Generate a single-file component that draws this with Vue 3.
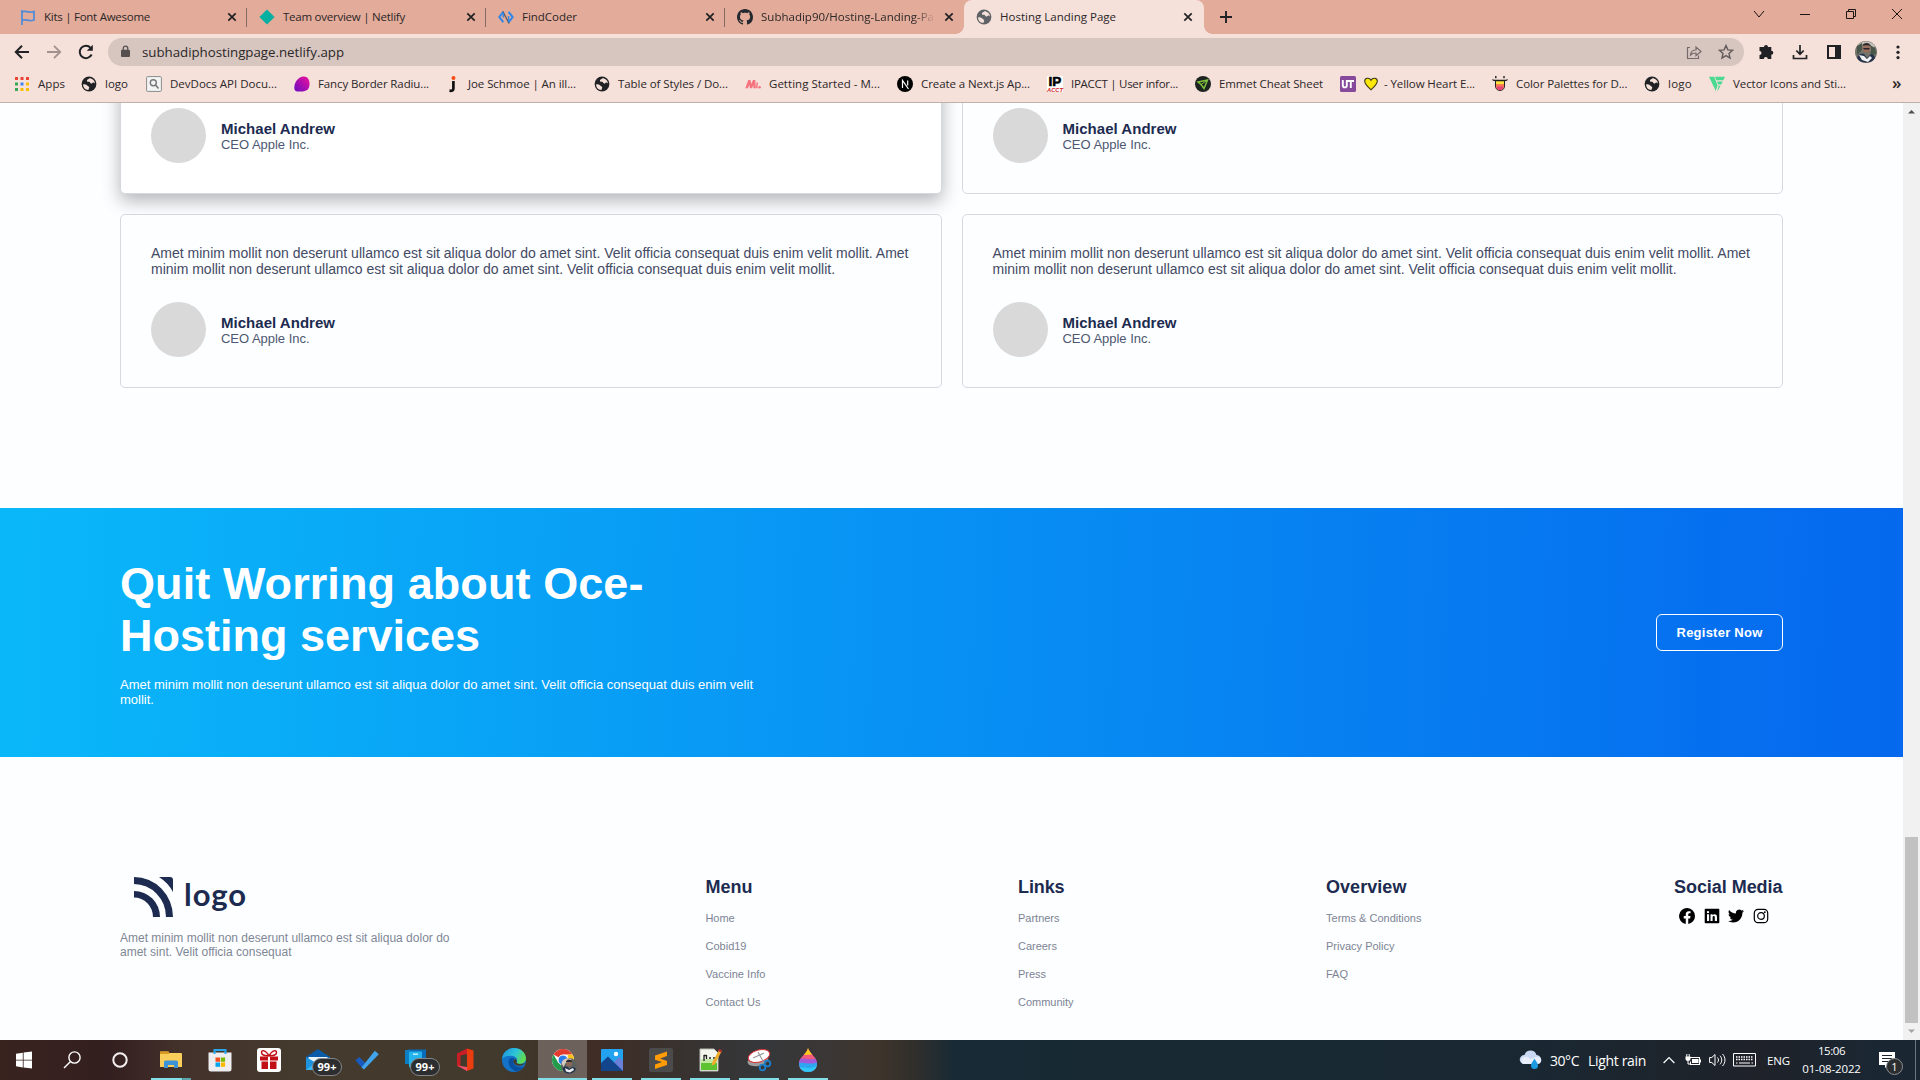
<script setup>
// Spreads a line of text over a given width by adjusting its tracking
const vFit = {
  mounted(el, { value }) {
    if (!value) return
    const range = document.createRange()
    range.selectNodeContents(el)
    const width = range.getBoundingClientRect().width
    const count = el.textContent.trim().length
    el.style.letterSpacing = ((value - width) / count).toFixed(3) + 'px'
  },
}

const globe = (c) =>
  `<circle cx="8" cy="8" r="7.4" fill="${c}"/><path d="M2.2 8.2c1.6.2 3 .1 4 1.2.8.9 2 .8 2 2 0 1-.8 1.300-.7 2.500-3.100.2-5.700-2.600-5.300-5.700zM8.500 2.200c-.6 1-2.400 1-2.600 2.200-.2 1.300 1.300 1.300 2.300 1.300.9 0 .7 1.500 1.800 1.700 1.300.3 1.300-1 2.300-1 .8 0 1.200.6 1.700.9C13.700 4.500 11.300 2.200 8.500 2.200z" fill="#f5e0da"/>`

const tabs = [
  { title: 'Kits | Font Awesome', w: 106, icon: '<path d="M2 1v15M2 3c4-2 5 1.500 12-.5v8.500c-6 2-8-1.500-12 .3" fill="none" stroke="#4f8bd8" stroke-width="1.700"/>' },
  { title: 'Team overview | Netlify', w: 122, icon: '<path d="M8 .4L15.600 8 8 15.600.4 8z" fill="#05b0a3"/>' },
  { title: 'FindCoder', w: 55, icon: '<path d="M5.500 2.500L1.300 8l4 5.200M10.500 2.800L14.700 8l-4.200 5.500" fill="none" stroke="#2f86ea" stroke-width="2"/><path d="M4.800 2.500l6.400 12" stroke="#555" stroke-width="1.300"/><path d="M5.300 3.500v5M10.600 7v6" stroke="#2f86ea" stroke-width="1.400"/>' },
  { title: 'Subhadip90/Hosting-Landing-Pa', w: 173, fade: true, icon: '<path fill="#24292f" d="M8 0C3.580 0 0 3.580 0 8c0 3.540 2.290 6.530 5.470 7.590.4.070.550-.170.550-.380 0-.190-.010-.820-.010-1.490-2.010.370-2.530-.490-2.690-.940-.090-.230-.480-.940-.820-1.130-.280-.150-.680-.520-.010-.530.630-.010 1.080.580 1.230.820.720 1.210 1.870.870 2.330.660.070-.520.280-.870.510-1.070-1.780-.200-3.640-.890-3.640-3.950 0-.870.310-1.590.820-2.150-.080-.200-.360-1.020.080-2.120 0 0 .670-.210 2.200.820.640-.180 1.320-.270 2-.270s1.360.090 2 .270c1.530-1.040 2.200-.820 2.200-.820.440 1.100.160 1.920.080 2.120.510.560.820 1.270.820 2.150 0 3.070-1.870 3.750-3.650 3.950.290.250.540.730.540 1.480 0 1.070-.010 1.930-.010 2.200 0 .210.150.460.550.380A8 8 0 0 0 16 8c0-4.420-3.580-8-8-8z"/>' },
  { title: 'Hosting Landing Page', w: 116, active: true, icon: globe('#5f6368') },
]

const bookmarks = [
  { t: 'Apps', w: 27, box: 67, icon: '<path fill="#ea4335" d="M1 1h3v3H1zM6.500 1h3v3h-3zM12 1h3v3h-3z"/><path fill="#34a853" d="M1 6.500h3v3H1zM1 12h3v3H1z"/><path fill="#4285f4" d="M6.500 6.500h3v3h-3z"/><path fill="#fbbc04" d="M12 6.500h3v3h-3zM6.500 12h3v3h-3zM12 12h3v3h-3z"/>' },
  { t: 'logo', w: 23, box: 65, icon: globe('#202124') },
  { t: 'DevDocs API Docu...', w: 107, box: 148, icon: '<rect x=".6" y=".6" width="14.800" height="14.800" rx="1" fill="#f4f4f4" stroke="#8b8b8b"/><circle cx="7.300" cy="6.800" r="3" fill="none" stroke="#777" stroke-width="1.400"/><path d="M9.500 9l3 3.500" stroke="#777" stroke-width="1.600"/>' },
  { t: 'Fancy Border Radiu...', w: 111, box: 150, icon: '<defs><linearGradient id="fb" x1="1" x2="0" y2="1"><stop stop-color="#f0109a"/><stop offset="1" stop-color="#6a0dc4"/></linearGradient></defs><path d="M9 .5c4-.6 7 3 6.500 8-.4 5-2.500 6.500-7 6.900C3.500 16 0 15.500.3 11.500.6 6 4 1.500 9 .5z" fill="url(#fb)"/>' },
  { t: 'Joe Schmoe | An ill...', w: 108, box: 150, icon: '<circle cx="9.500" cy="2" r="2" fill="#fa4b12"/><path d="M9.400 5v7.500c0 2-1.500 2.500-3.900 2.200" fill="none" stroke="#111" stroke-width="2.700"/>' },
  { t: 'Table of Styles / Do...', w: 110, box: 151, icon: globe('#202124') },
  { t: 'Getting Started - M...', w: 111, box: 152, icon: '<path d="M.3 12.200L3.300 4h2.200l.8 4L8 4h2.300l.5 8.200H8.400L8.300 9l-1.300 3.200H5L4.200 9l-1.300 3.200z" fill="#f4737e"/><path d="M12.200 6.500l-.4 5.700" stroke="#f4737e" stroke-width="1.500"/><circle cx="14.600" cy="11.200" r="1.200" fill="#f4737e"/>' },
  { t: 'Create a Next.js Ap...', w: 109, box: 150, icon: '<circle cx="8" cy="8" r="8" fill="#000"/><path d="M5.500 12V4.500l6 8.500M10.700 4.500v5" fill="none" stroke="#fff" stroke-width="1.200"/>' },
  { t: 'IPACCT | User infor...', w: 107, box: 148, icon: '<path fill="#fff" d="M0 0h16v16H0z"/><text x="8" y="10" text-anchor="middle" font-family="Liberation Sans" font-weight="700" font-size="13.500" stroke="#000" stroke-width=".6">IP</text><text x="8" y="15.900" text-anchor="middle" font-family="Liberation Sans" font-style="italic" font-weight="700" font-size="5.800" fill="#d3202a">ACCT</text>' },
  { t: 'Emmet Cheat Sheet', w: 104, box: 145, icon: '<circle cx="8" cy="8" r="8" fill="#1d2320"/><path d="M3 6l9.500-2L9 12.500 6 8.500z" fill="none" stroke="#7fc13c" stroke-width="1.500"/><path d="M6 8.500L12.500 4" stroke="#7fc13c"/>' },
  { t: '- Yellow Heart E...', w: 91, box: 152, heart: true, icon: '<rect width="16" height="16" rx="1.500" fill="#87499b"/><path d="M2.800 4v5.500c0 2.500 4 2.500 4 0V4M7.500 5h6.500M10.800 5v7" fill="none" stroke="#fff" stroke-width="1.900"/>' },
  { t: 'Color Palettes for D...', w: 111.5, box: 152, icon: '<path d="M3.500 4.500h9V10c0 6-9 6-9 0z" fill="#fde33c" stroke="#222"/><path d="M4 8h8v3H4z" fill="#f77b52"/><path d="M4.200 10.500h7.600c-.7 5-6.900 5-7.600 0z" fill="#e8417c"/><path d="M.5 3.500c.5 1 2 1 3 1h9c1 0 2.500 0 3-1M3.800 0v2.200M12 0v2.200" fill="none" stroke="#222" stroke-width="1.400"/>' },
  { t: 'logo', w: 24, box: 65, icon: globe('#202124') },
  { t: 'Vector Icons and Sti...', w: 113, box: 150, icon: '<path d="M0 .8h5.200l3.300 8.500L6.800 15z" fill="#4ad991"/><path d="M6 .8h10l-1.700 3.400H7.400zM8 5.600h5.600L12.300 8.400H9.200zM9.600 9.800h2L8.200 15.500z" fill="#4ad991"/>' },
]

// Cards of the upper row are scrolled half out of view: only their authors show
const people = [
  { id: 'a', raised: true, quoted: false },
  { id: 'b', quoted: false },
  { id: 'c', quoted: true },
  { id: 'd', quoted: true },
]
const quote = [
  { t: 'Amet minim mollit non deserunt ullamco est sit aliqua dolor do amet sint. Velit officia consequat duis enim velit mollit. Amet', w: 757.5 },
  { t: 'minim mollit non deserunt ullamco est sit aliqua dolor do amet sint. Velit officia consequat duis enim velit mollit.', w: 684 },
]

const columns = [
  { title: 'Menu', w: 47, links: [['Home', 29], ['Cobid19', 41], ['Vaccine Info', 60], ['Contact Us', 55]] },
  { title: 'Links', w: 46.500, links: [['Partners', 41.500], ['Careers', 39], ['Press', 28], ['Community', 55.500]] },
  { title: 'Overview', w: 80.500, links: [['Terms & Conditions', 95.500], ['Privacy Policy', 68.500], ['FAQ', 22]] },
]

const social = [
  '<path d="M16 8.050a8 8 0 1 0-9.250 7.950v-5.620H4.720V8.050h2.030V6.280c0-2.020 1.190-3.130 3.020-3.130.87 0 1.790.16 1.790.16v1.980h-1c-1 0-1.310.62-1.310 1.260v1.500h2.220l-.36 2.330H9.250V16A8 8 0 0 0 16 8.050z"/>',
  '<path fill-rule="evenodd" d="M1.500.7h13a.8.8 0 0 1 .8.800v13a.8.8 0 0 1-.8.800h-13a.8.8 0 0 1-.8-.8v-13a.8.8 0 0 1 .8-.8zM3 6.300V13h2.100V6.300zM4 2.900a1.200 1.200 0 1 0 0 2.400 1.200 1.200 0 0 0 0-2.400zM6.500 6.300V13h2.100V9.500c0-1.900 2.200-1.900 2.200 0V13H13V8.800c0-3-3.200-3.200-4.400-1.600v-.9z"/>',
  '<path d="M5.030 14.500c6.030 0 9.340-5 9.340-9.330v-.42A6.700 6.700 0 0 0 16 3.050a6.600 6.600 0 0 1-1.890.520 3.300 3.300 0 0 0 1.450-1.820 6.500 6.500 0 0 1-2.090.800 3.290 3.290 0 0 0-5.600 3A9.300 9.300 0 0 1 1.110 2.100a3.300 3.300 0 0 0 1.020 4.390A3.300 3.300 0 0 1 .64 6.080a3.290 3.290 0 0 0 2.630 3.260 3.200 3.200 0 0 1-1.480.060 3.290 3.290 0 0 0 3.060 2.280A6.600 6.600 0 0 1 0 13.020a9.300 9.300 0 0 0 5.030 1.480z"/>',
  '<rect x="1.300" y="1.300" width="13.400" height="13.400" rx="3.700" fill="none" stroke="#000" stroke-width="1.200"/><circle cx="8" cy="8" r="3.300" fill="none" stroke="#000" stroke-width="1.200"/><circle cx="11.800" cy="4.200" r=".9"/>',
]

const system = [
  '<path d="M4 5.700l6.800-1v7H4zM11.600 4.600L20 3.500v8.200h-8.400zM4 12.500h6.800v6.900L4 18.300zM11.600 12.500H20v8.100l-8.400-1.100z" fill="#fff"/>',
  '<circle cx="14.500" cy="9.500" r="5.600" fill="none" stroke="#fff" stroke-width="1.400"/><path d="M10.500 13.500L4 20" stroke="#fff" stroke-width="1.400"/>',
  '<circle cx="12" cy="12" r="6.700" fill="none" stroke="#f4f0f0" stroke-width="2"/>',
]

const apps = [
  { run: 'double', icon: '<path d="M1 4.500a1 1 0 0 1 1-1h7l1.500 1.500H22a1 1 0 0 1 1 1V19H1z" fill="#f9ce5b"/><path d="M1 3.500h9V6H1z" fill="#d79a1f"/><path d="M5 20v-6a1.500 1.500 0 0 1 1.500-1.500h11A1.500 1.500 0 0 1 19 14v6h-4v-3H9v3z" fill="#3e92d6"/>' },
  { icon: '<path d="M6.500 7V2h11v5" fill="none" stroke="#28a8ea" stroke-width="2"/><path d="M.5 4.500h23V21a2.500 2.500 0 0 1-2.500 2.500H3A2.500 2.500 0 0 1 .5 21z" fill="#eeedf0"/><path d="M6.500 6V4M17.500 6V4" stroke="#28a8ea" stroke-width="2"/><path fill="#f25022" d="M7.500 9.500H12v4.300H7.500z"/><path fill="#7fba00" d="M12.800 9.500h4.300v4.300h-4.300z"/><path fill="#00a4ef" d="M7.500 14.500H12v4.300H7.500z"/><path fill="#ffb900" d="M12.800 14.500h4.300v4.300h-4.300z"/>' },
  { icon: '<rect width="24" height="24" rx="3" fill="#fff"/><path d="M3 8.500h8v4H3zM13 8.500h8v4h-8zM4.500 13.500H11V21H4.500zM13 13.500h6.500V21H13z" fill="#c11016"/><path d="M12 8C9 2 4.500 1.500 4.500 4.500S8 7.500 12 8c3-6 7.500-6.500 7.500-3.500S16 7.500 12 8z" fill="none" stroke="#c11016" stroke-width="1.500"/>' },
  { badge: true, icon: '<path d="M0 9l12-8 12 8v3H0z" fill="#0a5ba8"/><path d="M2.500 9h19v8h-19z" fill="#e9f4fb"/><path d="M0 9l12 7 12-7v13H0z" fill="#1d93e0"/><path d="M0 22l10-8h4l10 8z" fill="#38b6f2"/>' },
  { icon: '<path d="M.5 12.500L4.200 9l6.300 6.200-3.800 4.300z" fill="#185abd"/><path d="M6.500 19.500L19.800 2.700l4 3.500L9 21.500z" fill="#41a5ee"/>' },
  { badge: true, icon: '<path d="M4 1.500h18v12H4z" fill="#0a6cb8"/><path d="M1 2h5v14H1z" fill="#0c7fc4"/><rect x="5" y="3.500" width="13" height="16" rx="1" fill="#23b4ee"/><path d="M9 5.500h5v1.500H9z" fill="#bdf0ff"/>' },
  { icon: '<path d="M14 .5l6.500 2v18L14 23z" fill="#ea3e10"/><path d="M14 .5L4 5.500v12l3.500 2.200V7.500L14 6z" fill="#c71f25"/><path d="M4 17.500l10 1.500v4z" fill="#f2506b"/>' },
  { icon: '<defs><linearGradient id="ed" x1="0" x2="1" y2=".4"><stop stop-color="#1a8fe0"/><stop offset=".6" stop-color="#2ec4d8"/><stop offset="1" stop-color="#5ddb56"/></linearGradient></defs><circle cx="12" cy="12" r="12" fill="#1273c9"/><path d="M.1 11C1 3.500 6.500 0 12 0c7 0 12 5 12 10.500 0 5-6 6.500-9.500 4.500 1.500-2 1-6-3.500-7C6 7 1.500 8.500.1 11z" fill="url(#ed)"/><path d="M8.500 10c-4 3.500-1.500 11 6 13.500 3-.5 6-2.500 7.500-5-6 2-11.500-1-10.500-6 .2-1.200.5-2 1-2.500z" fill="#0a4f9f"/><path d="M11.400 13c0 3.500 4 5.500 8 4.500 2-.5 3-1.500 3.500-2.500-3 1.500-6.500 1.500-8.500 0 .6-1.500.3-3-1-4-1.200.5-2 1-2 2z" fill="#433a2d"/>' },
  { run: 'wide', active: true, icon: '<circle cx="12" cy="12" r="11" fill="#fff"/><path d="M12 12L2.500 6.500A11 11 0 0 1 21.500 6.500H12z" fill="#e33b2e"/><path d="M2.500 6.500A11 11 0 0 0 11 23l4.500-8L7.200 14.500z" fill="#249b4b"/><path d="M21.500 6.500A11 11 0 0 1 11 23l6-10-.5-6.500z" fill="#fcc31e"/><circle cx="12" cy="12" r="5" fill="#2b7de9" stroke="#fff"/><circle cx="18" cy="18" r="8" fill="#5d625f"/><path d="M10.500 15c1-4 6-6 10-4l-2 4-4 0-2 4z" fill="#d6cbbf"/><circle cx="18" cy="15.500" r="3" fill="#8d6858"/><path d="M15 14c0-3.500 6-3.500 6 0z" fill="#2c2a2e"/><path d="M11.500 21c1-3 4-3 5-2l2 2 3-2c2 0 3 1 3.500 2-3 6-11 6-13.500 0z" fill="#26324a"/><path d="M14 20l4 2 4-2 1 2-4 2.500-4-1z" fill="#eceff2"/>' },
  { run: 'one', icon: '<rect x="1" y="1" width="22" height="22" rx="1" fill="#23a3ef"/><path d="M12 16l7-7 4 4v10H12z" fill="#6a7fd8"/><path d="M1 15l7-6.500L23 23H1z" fill="#12458c"/><circle cx="16" cy="6" r="2.200" fill="#fff"/>' },
  { run: 'one', icon: '<rect width="24" height="24" rx="2" fill="#4b4b4c"/><path d="M6 7.500l12-4v4.500l-7 2.500 7 2.500V17L6 21v-4.500l7-2.500-7-2.300z" fill="#ff9c05"/>' },
  { run: 'one', icon: '<path d="M2 1h14l4 4v18H2z" fill="#f4f6ee" stroke="#b9bdb2"/><path d="M3 13h16v9H3z" fill="#5dc331"/><path d="M3 11h16v4H3z" fill="#c2e8a4"/><path d="M6 13V7M8.500 7v4M6 7.500h2.500M11 10h2M15 10h2" stroke="#222" stroke-width="1.300" fill="none"/><path d="M13.500 18l1-4L21 2l2.500 1.500L17 16z" fill="#f0ac2a"/><path d="M21 1l3 1.500-1 2-3-1.500z" fill="#c22d2d"/>' },
  { run: 'one', icon: '<ellipse cx="11" cy="12.500" rx="10.500" ry="5.500" fill="#9c9c9c" transform="rotate(-12 11 13)"/><ellipse cx="12" cy="8" rx="11" ry="6" fill="#fff" stroke="#d8333b" transform="rotate(-16 12 8)"/><path d="M6 10l11-5M11 4l6 11" stroke="#999" stroke-width="1.200"/><circle cx="15.500" cy="19.500" r="2.800" fill="none" stroke="#1d7fc9" stroke-width="1.800"/><circle cx="20.500" cy="15.500" r="2.800" fill="none" stroke="#1d7fc9" stroke-width="1.800"/>' },
  { run: 'one', icon: '<defs><clipPath id="dp"><path d="M12 0c1 5 9 9 9 15.500C21 20.500 17 24 12 24s-9-3.500-9-8.500C3 9 11 6 12 0z"/></clipPath></defs><g clip-path="url(#dp)"><path fill="#f05b7e" d="M0 0h24v24H0z"/><path fill="#ffca1f" d="M0 0h24v6L9 7z"/><path d="M0 11c8-3 14 4 24-3v6c-10 6-14-1-24 5z" fill="#a25bd8"/><path d="M0 16c8-4 13 3 24-3v11H0z" fill="#2ea5f0"/><path d="M3 19c6 0 12 3 18-2v7H3z" fill="#30c6f5"/></g>' },
]
</script>

<template>
  <div class="screen">
    <header class="browser">
      <div class="tabstrip">
        <div v-for="(tab, i) in tabs" :key="tab.title" class="tab" :class="{ active: tab.active, ruled: i < 3 }">
          <svg class="ico" viewBox="0 0 16 16" v-html="tab.icon"></svg>
          <div class="tab-title" :class="{ fade: tab.fade }"><span v-fit="tab.w">{{ tab.title }}</span></div>
          <svg class="close" viewBox="0 0 10 10"><path d="M1.300 1.300l7.400 7.400M8.700 1.300L1.300 8.700" stroke="#202124" stroke-width="1.700" /></svg>
        </div>
        <svg class="plus" viewBox="0 0 12 12"><path d="M6 0v12M0 6h12" stroke="#202124" stroke-width="1.900" /></svg>
        <div class="window-controls">
          <svg viewBox="0 0 12 12"><path d="M1 3l5 6 5-6" /></svg>
          <svg viewBox="0 0 12 12"><path d="M1 6.500h10" /></svg>
          <svg viewBox="0 0 12 12"><path d="M1.500 3.500h7v7h-7zM3.500 3.500v-2h7v7h-2" /></svg>
          <svg viewBox="0 0 12 12"><path d="M1 1l10 10M11 1L1 11" /></svg>
        </div>
      </div>

      <div class="toolbar">
        <div class="nav">
          <svg viewBox="0 0 16 16"><path d="M15 8H2M8 1.800L1.800 8 8 14.200" fill="none" stroke="#202124" stroke-width="2" /></svg>
          <svg viewBox="0 0 16 16"><path d="M1 8h13M8 1.800L14.200 8 8 14.200" fill="none" stroke="#a2928e" stroke-width="1.800" /></svg>
          <svg viewBox="0 0 16 16"><path d="M13.600 10.500A6.200 6.200 0 1 1 12.600 3.800" fill="none" stroke="#202124" stroke-width="2" /><path d="M14.800.8v6H8.800z" fill="#202124" /></svg>
        </div>
        <div class="omnibox">
          <svg class="lock" viewBox="0 0 10 14"><path d="M1 5h8a1 1 0 0 1 1 1v6a1 1 0 0 1-1 1H1a1 1 0 0 1-1-1V6a1 1 0 0 1 1-1z" fill="#55504f" /><path d="M2.500 5.500V3.500a2.500 2.500 0 0 1 5 0v2" fill="none" stroke="#55504f" stroke-width="1.400" /></svg>
          <span v-fit="202" class="url">subhadiphostingpage.netlify.app</span>
          <svg class="share" viewBox="0 0 16 16"><path d="M4 3.500H1.500v11h11V11.500M4.500 11C4.800 7.500 6.800 6 10 6V3l5 4.500-5 4.300V9c-2.500 0-4.200.5-5.500 2z" fill="none" stroke="#75696a" stroke-width="1.200" /></svg>
          <svg class="star" viewBox="0 0 16 16"><path d="M8 1.600l1.900 4.300 4.600.4-3.500 3.100 1 4.600L8 11.600 4 14l1-4.600-3.500-3.100 4.600-.4z" fill="none" stroke="#625a59" stroke-width="1.400" /></svg>
        </div>
        <div class="actions">
          <svg viewBox="0 0 16 16"><path d="M6 3a2 2 0 0 1 4 0h3.300v3.800a2 2 0 0 1 0 4V15H9.800a2 2 0 0 0-4 0H1.500v-4a2 2 0 0 0 0-4V3z" fill="#202124" /></svg>
          <svg viewBox="0 0 16 16"><path d="M8 1v9M4.300 6.500L8 10.200l3.700-3.700M1.500 11v3.500h13V11" fill="none" stroke="#202124" stroke-width="1.700" /></svg>
          <svg viewBox="0 0 16 16"><path d="M2 2h12v12H2z" fill="none" stroke="#202124" stroke-width="2" /><path d="M9 2h5v12H9z" fill="#202124" /></svg>
          <svg class="avatar" viewBox="0 0 22 22"><circle cx="11" cy="11" r="11" fill="#72736b" /><path d="M2 5C6-1 16-1 20 5l-3 5-12-1z" fill="#c9c2b7" /><path d="M2 5l5-3 1 6-6 6zM15 4l5 3 1 6-5 1z" fill="#49564b" /><circle cx="11.500" cy="7.500" r="4" fill="#986f5d" /><path d="M7.500 5c0-4 8-4 8 0-2-1-6-1-8 0zM8.500 7h6v1.500h-6z" fill="#29252a" /><path d="M2 17c1-4 5-5 7-4l3 4 4-4c2 0 4 2 4 4-3 6-15 6-18 0z" fill="#26324a" /><path d="M4 14l5 1 3 3 3-3 2 2-4 4-6-2z" fill="#eff0f2" /></svg>
          <svg viewBox="0 0 16 16"><circle cx="8" cy="3" r="1.600" /><circle cx="8" cy="8.300" r="1.600" /><circle cx="8" cy="13.600" r="1.600" /></svg>
        </div>
      </div>

      <div class="bookmarks">
        <div v-for="(b, i) in bookmarks" :key="i" class="bookmark" :style="{ width: b.box + 'px' }">
          <svg class="ico" viewBox="0 0 16 16" v-html="b.icon"></svg>
          <svg v-if="b.heart" class="heart" viewBox="0 0 14 14"><path d="M7 12.800C4 10 .7 7.300.7 4.300.7.700 5.500.3 7 3.300 8.500.3 13.300.7 13.300 4.300c0 3-3.300 5.700-6.300 8.500z" fill="#fde60b" stroke="#3d3a15" stroke-width="1.100" /></svg>
          <span v-fit="b.w">{{ b.t }}</span>
        </div>
        <span class="more">»</span>
      </div>
    </header>

    <div class="viewport">
      <main class="page">
        <section class="cards">
          <article v-for="p in people" :key="p.id" class="card" :class="{ raised: p.raised }">
            <p v-if="p.quoted"><span v-for="q in quote" :key="q.t" v-fit="q.w" class="line">{{ q.t }}</span></p>
            <div class="person">
              <div class="photo"></div>
              <div>
                <h4 v-fit="114">Michael Andrew</h4>
                <h5 v-fit="88.5">CEO Apple Inc.</h5>
              </div>
            </div>
          </article>
        </section>

        <section class="banner">
          <div class="pitch">
            <h1>
              <span v-fit="523.5" class="line">Quit Worring about Oce-</span>
              <span v-fit="360" class="line">Hosting services</span>
            </h1>
            <p>
              <span v-fit="633" class="line">Amet minim mollit non deserunt ullamco est sit aliqua dolor do amet sint. Velit officia consequat duis enim velit</span>
              <span class="line">mollit.</span>
            </p>
          </div>
          <button><span v-fit="86">Register Now</span></button>
        </section>

        <footer class="footer">
          <div class="brand">
            <div class="logo">
              <svg viewBox="0 0 39 40"><path d="M0 0A39 40 0 0 1 39 40H32A32 33 0 0 0 0 7zM0 14A26 26 0 0 1 26 40H19A19 19.500 0 0 0 0 20.500zM25 0H36a3 3 0 0 1 3 3V15A40 40 0 0 0 25 0z" fill="#1c2b4f" /></svg>
              <span v-fit="63">logo</span>
            </div>
            <p>
              <span v-fit="329.5" class="line">Amet minim mollit non deserunt ullamco est sit aliqua dolor do</span>
              <span v-fit="171.5" class="line">amet sint. Velit officia consequat</span>
            </p>
          </div>
          <div v-for="c in columns" :key="c.title" class="column">
            <h3><span v-fit="c.w">{{ c.title }}</span></h3>
            <ul>
              <li v-for="l in c.links" :key="l[0]"><span v-fit="l[1]">{{ l[0] }}</span></li>
            </ul>
          </div>
          <div class="column">
            <h3><span v-fit="108.5">Social Media</span></h3>
            <div class="social"><svg v-for="(s, i) in social" :key="i" viewBox="0 0 16 16" v-html="s"></svg></div>
          </div>
        </footer>
      </main>

      <div class="scrollbar">
        <svg viewBox="0 0 17 17"><path d="M5 10.500L8.500 7l3.500 3.500z" fill="#505050" /></svg>
        <div class="thumb"></div>
        <svg viewBox="0 0 17 17"><path d="M5 6.500L8.500 10 12 6.500z" fill="#a3a3a3" /></svg>
      </div>
    </div>

    <div class="taskbar">
      <div v-for="(s, i) in system" :key="i" class="sys"><svg viewBox="0 0 24 24" v-html="s"></svg></div>
      <div class="apps">
        <div v-for="(a, i) in apps" :key="i" class="app" :class="[a.run, { on: a.active }]">
          <svg viewBox="0 0 24 24" v-html="a.icon"></svg>
          <span v-if="a.badge" class="count">99+</span>
        </div>
      </div>
      <div class="tray">
        <svg class="weather" viewBox="0 0 23 20"><path d="M5 14a4.500 4.500 0 0 1 .5-9C7-.8 16-1 17.500 5c6 .5 6.500 8.500 1 9z" fill="#c9d8f3" /><path d="M4 14a4 4 0 0 1 1-7c4-1 5 2 7 2s5-3 8-2c3 2 2.500 7-1.500 7z" fill="#e9eefb" /><path d="M15.500 8.500c1.500 3 3.500 4.500 3.500 7a3.500 3.500 0 0 1-7 0c0-2.500 2-4 3.500-7z" fill="#1c9be3" /></svg>
        <span class="temp" v-fit="29">30°C</span>
        <span class="rain" v-fit="58">Light rain</span>
        <svg class="caret" viewBox="0 0 12 8"><path d="M.6 7L6 1.500 11.400 7" fill="none" stroke="#fff" stroke-width="1.200" /></svg>
        <svg class="battery" viewBox="0 0 16 12"><path d="M4.500 3.500h10v7h-9v-3" fill="none" stroke="#fff" stroke-width="1.100" /><path d="M7 5h6.500v4H7zM14.500 5.500H16v3h-1.500zM.5 2.500h5v2.500c0 1.300-1 2-2.500 2S.5 6.300.5 5z" fill="#fff" /><path d="M1.800 0v3M4.200 0v3M3 7v3h2.500" stroke="#fff" fill="none" /></svg>
        <svg class="speaker" viewBox="0 0 17 14"><path d="M.6 4.500h2.200L6 1.500v11L2.800 9.500H.6zM8.500 4.500c1.300 1.500 1.300 3.500 0 5M11 2.800c2.300 2.500 2.300 6 0 8.500M13.500 1c3.300 3.500 3.300 8.500 0 12" fill="none" stroke="#fff" /></svg>
        <svg class="keyboard" viewBox="0 0 23 14"><path d="M.5.5h22v12.500H.5z" fill="none" stroke="#fff" /><path d="M3 4h17.500M3 6.500h17.500" stroke="#fff" stroke-width="1.300" stroke-dasharray="1.500 1" /><path d="M3 10h1.500M6 10h11M18.500 10H20" stroke="#fff" /></svg>
        <span class="lang" v-fit="23">ENG</span>
        <div class="clock"><span v-fit="27">15:06</span><span v-fit="58.5">01-08-2022</span></div>
        <div class="notes">
          <svg viewBox="0 0 16 16"><path d="M0 0h16v13H9l-3 3v-3H0z" fill="#fff" /><path d="M3 3.500h10M3 6.500h10M3 9.500h7" stroke="#1d242d" /></svg>
          <span class="one-badge">1</span>
        </div>
      </div>
    </div>
  </div>
</template>

<style>
body { margin: 0; overflow: hidden; }
</style>

<style scoped>
* { box-sizing: border-box; }
h1, h3, h4, h5, p, ul { margin: 0; padding: 0; }
svg { display: block; flex: none; overflow: visible; }
.line { display: block; white-space: nowrap; }

.screen {
  width: 1920px;
  height: 1080px;
  display: flex;
  flex-direction: column;
  font-family: "Liberation Sans", Arial, sans-serif;
  overflow: hidden;
}

/* Browser frame */
.browser {
  height: 103px;
  flex: none;
  background: #f5e0da;
  border-bottom: 1px solid #bfb0ac;
  font-family: "Open Sans", "Noto Sans", sans-serif;
  font-size: 11.5px;
  color: #2b2728;
  white-space: nowrap;
}
.ico { width: 16px; height: 16px; }
.tabstrip { height: 34px; padding-left: 8px; background: #e3ab99; display: flex; align-items: flex-start; }
.tab {
  width: 239px;
  height: 34px;
  padding-left: 12px;
  display: flex;
  align-items: center;
  position: relative;
}
.tab.ruled::after { content: ""; position: absolute; right: 0; top: 8px; width: 1px; height: 19px; background: #866962; }
.tab.active { width: 240px; background: #f5e0da; border-radius: 8px 8px 0 0; }
.tab.active::before, .tab.active::after {
  content: "";
  position: absolute;
  bottom: 0;
  width: 8px;
  height: 8px;
}
.tab.active::before { left: -8px; background: radial-gradient(circle at 0 0, transparent 7.5px, #f5e0da 8px); }
.tab.active::after { right: -8px; background: radial-gradient(circle at 100% 0, transparent 7.5px, #f5e0da 8px); }
.tab-title { width: 174px; margin-left: 8px; overflow: hidden; line-height: 18px; }
.tab-title.fade { -webkit-mask-image: linear-gradient(90deg, #000 88%, transparent); mask-image: linear-gradient(90deg, #000 88%, transparent); }
.close { width: 10px; height: 10px; margin-left: 9px; }
.plus { width: 12px; height: 12px; margin: 11px 0 0 16px; }
.window-controls { margin: 8px 17px 0 auto; display: flex; gap: 34px; }
.window-controls svg { width: 12px; height: 12px; fill: none; stroke: #1b1514; stroke-width: 1; }

.toolbar { height: 36px; display: flex; align-items: center; }
.nav { width: 108px; padding-left: 14px; display: flex; gap: 16px; }
.nav svg { width: 16px; height: 16px; }
.omnibox {
  width: 1636px;
  height: 28px;
  padding: 0 10px 0 13px;
  border-radius: 14px;
  background: #d7c6c0;
  display: flex;
  align-items: center;
}
.lock { width: 9px; height: 13px; margin-top: -2px; }
.url { margin-left: 12px; font-size: 13.3px; }
.share { width: 16px; height: 16px; margin-left: auto; }
.star { width: 16px; height: 16px; margin-left: 16px; }
.actions { padding-left: 14px; display: flex; align-items: center; gap: 18px; }
.actions svg { width: 16px; height: 16px; fill: #202124; }
.actions .avatar { width: 22px; height: 22px; margin: 0 -5px; }

.bookmarks { height: 28px; padding-left: 14px; display: flex; align-items: center; }
.bookmark { flex: none; display: flex; align-items: center; gap: 8px; line-height: 16px; }
.heart { width: 14px; height: 14px; margin-right: -2px; }
.more { margin: -3px 0 0 33px; font-size: 17px; font-weight: 600; line-height: 20px; }

/* Page */
.viewport { height: 937px; flex: none; display: flex; overflow: hidden; }
.page { width: 1903px; background: #fdfeff; }
.cards {
  width: 1663px;
  margin: -83px auto 0;
  display: grid;
  grid-template-columns: 1fr 1fr;
  gap: 20px;
}
.card {
  height: 174px;
  padding: 30px;
  border: 1px solid #d5d9de;
  border-radius: 5px;
  background: #fdfeff;
  display: flex;
  flex-direction: column;
  justify-content: flex-end;
}
.card.raised { background: #fff; box-shadow: 0 7px 18px rgba(0, 0, 0, 0.29); }
.card p { font-size: 14px; line-height: 16px; color: #434a64; }
.person { margin-top: 25px; display: flex; align-items: center; gap: 15px; }
.photo { width: 55px; height: 55px; border-radius: 50%; background: #d9d9d9; }
h4 { font-size: 15px; line-height: 17px; color: #1c2b4f; white-space: nowrap; }
h5 { font-size: 13px; line-height: 15px; font-weight: 400; color: #4d5871; white-space: nowrap; }

.banner {
  height: 249px;
  margin-top: 120px;
  padding: 50px 120px;
  background: linear-gradient(92deg, #0ab8f9, #0568ee);
  color: #fff;
  display: flex;
  align-items: center;
  justify-content: space-between;
}
h1 { font-size: 45px; line-height: 52px; }
.pitch p { margin-top: 15px; font-size: 13px; line-height: 15px; }
.banner button {
  width: 127px;
  height: 37px;
  padding: 0;
  border: 1px solid #fff;
  border-radius: 6px;
  background: transparent;
  color: #fff;
  font: 700 13px "Liberation Sans", Arial, sans-serif;
  white-space: nowrap;
}

.footer {
  margin-top: 120px;
  padding: 0 120px;
  display: grid;
  grid-template-columns: 585.5px 312.5px 308px 348px 109px;
}
.logo { height: 40px; padding-left: 14px; display: flex; gap: 11px; }
.logo svg { width: 39px; height: 40px; }
.logo span { font-family: Lato, sans-serif; font-size: 31px; line-height: 35px; font-weight: 700; color: #1c2b4f; }
.brand p { margin-top: 14px; font-size: 12px; line-height: 14px; color: #7f8796; }
h3 { font-size: 18px; line-height: 20px; color: #1c2b4f; white-space: nowrap; }
.column ul { margin-top: 15px; list-style: none; font-size: 11px; line-height: 13px; color: #7c8494; white-space: nowrap; }
li { margin-bottom: 15px; }
.social { margin-top: 11px; padding-left: 5px; display: flex; gap: 8.500px; }
.social svg { width: 16px; height: 16px; }

.scrollbar { width: 17px; height: 937px; background: #f1f1f1; display: flex; flex-direction: column; }
.scrollbar svg { width: 17px; height: 17px; }
.thumb { width: 13px; height: 186px; margin: auto 2px 0; background: #c1c1c1; }

/* Taskbar */
.taskbar {
  height: 40px;
  flex: none;
  display: flex;
  color: #fff;
  font-family: "Open Sans", "Noto Sans", sans-serif;
  background: linear-gradient(90deg, #38231f 0, #341f20 110px, #43312b 180px, #443a2d 300px, #423a2c 500px, #3f2d26 600px, #38322f 680px, #35373a 760px, #3b3735 830px, #3e342b 880px, #302f2c 915px, #182a35 955px, #192833 1500px, #1f2229 1760px, #1a2733 1880px);
}
.sys { width: 48px; display: flex; align-items: center; justify-content: center; }
.sys svg { width: 24px; height: 24px; }
.apps { margin-left: 2px; display: flex; }
.app { width: 49px; height: 40px; display: flex; align-items: center; justify-content: center; position: relative; }
.app svg { width: 24px; height: 24px; }
.app.on { background: #6c625b; }
.app.one::after, .app.wide::after, .app.double::after {
  content: "";
  position: absolute;
  bottom: 0;
  left: 5px;
  width: 40px;
  height: 2px;
  background: #83dfe7;
}
.app.wide::after { left: 0; width: 49px; }
.app.double::after { background: linear-gradient(90deg, #83dfe7 31px, #3f7d83 31px, #5ea5ab 32px); }
.count {
  position: absolute;
  left: 19px;
  top: 18px;
  width: 30px;
  height: 18px;
  border: 1px solid #85858a;
  border-radius: 9px;
  background: #2b2d2e;
  font-size: 11px;
  font-weight: 700;
  line-height: 15px;
  text-align: center;
}
.tray { margin-left: auto; width: 401px; display: flex; align-items: center; font-size: 14px; white-space: nowrap; }
.weather { width: 23px; height: 20px; }
.temp { width: 29px; margin-left: 8px; }
.rain { width: 58px; margin-left: 9px; }
.caret { width: 12px; height: 8px; margin-left: 17px; }
.battery { width: 16px; height: 12px; margin-left: 10px; }
.speaker { width: 17px; height: 14px; margin-left: 8px; }
.keyboard { width: 23px; height: 14px; margin-left: 7px; }
.lang { width: 23px; margin-left: 11px; font-size: 11.5px; }
.clock { width: 59px; margin-left: 12px; margin-top: -1px; display: flex; flex-direction: column; align-items: center; font-size: 11.5px; line-height: 18px; }
.notes { position: relative; margin-left: 18px; height: 40px; width: 37px; padding-top: 12px; border-right: 1px solid #6e767d; }
.notes svg { width: 16px; height: 16px; }
.one-badge {
  position: absolute;
  left: 7px;
  top: 18px;
  width: 17px;
  height: 17px;
  border: 1px solid #8b8f93;
  border-radius: 50%;
  background: #2b2d2f;
  font-size: 11px;
  line-height: 15px;
  text-align: center;
}
</style>
